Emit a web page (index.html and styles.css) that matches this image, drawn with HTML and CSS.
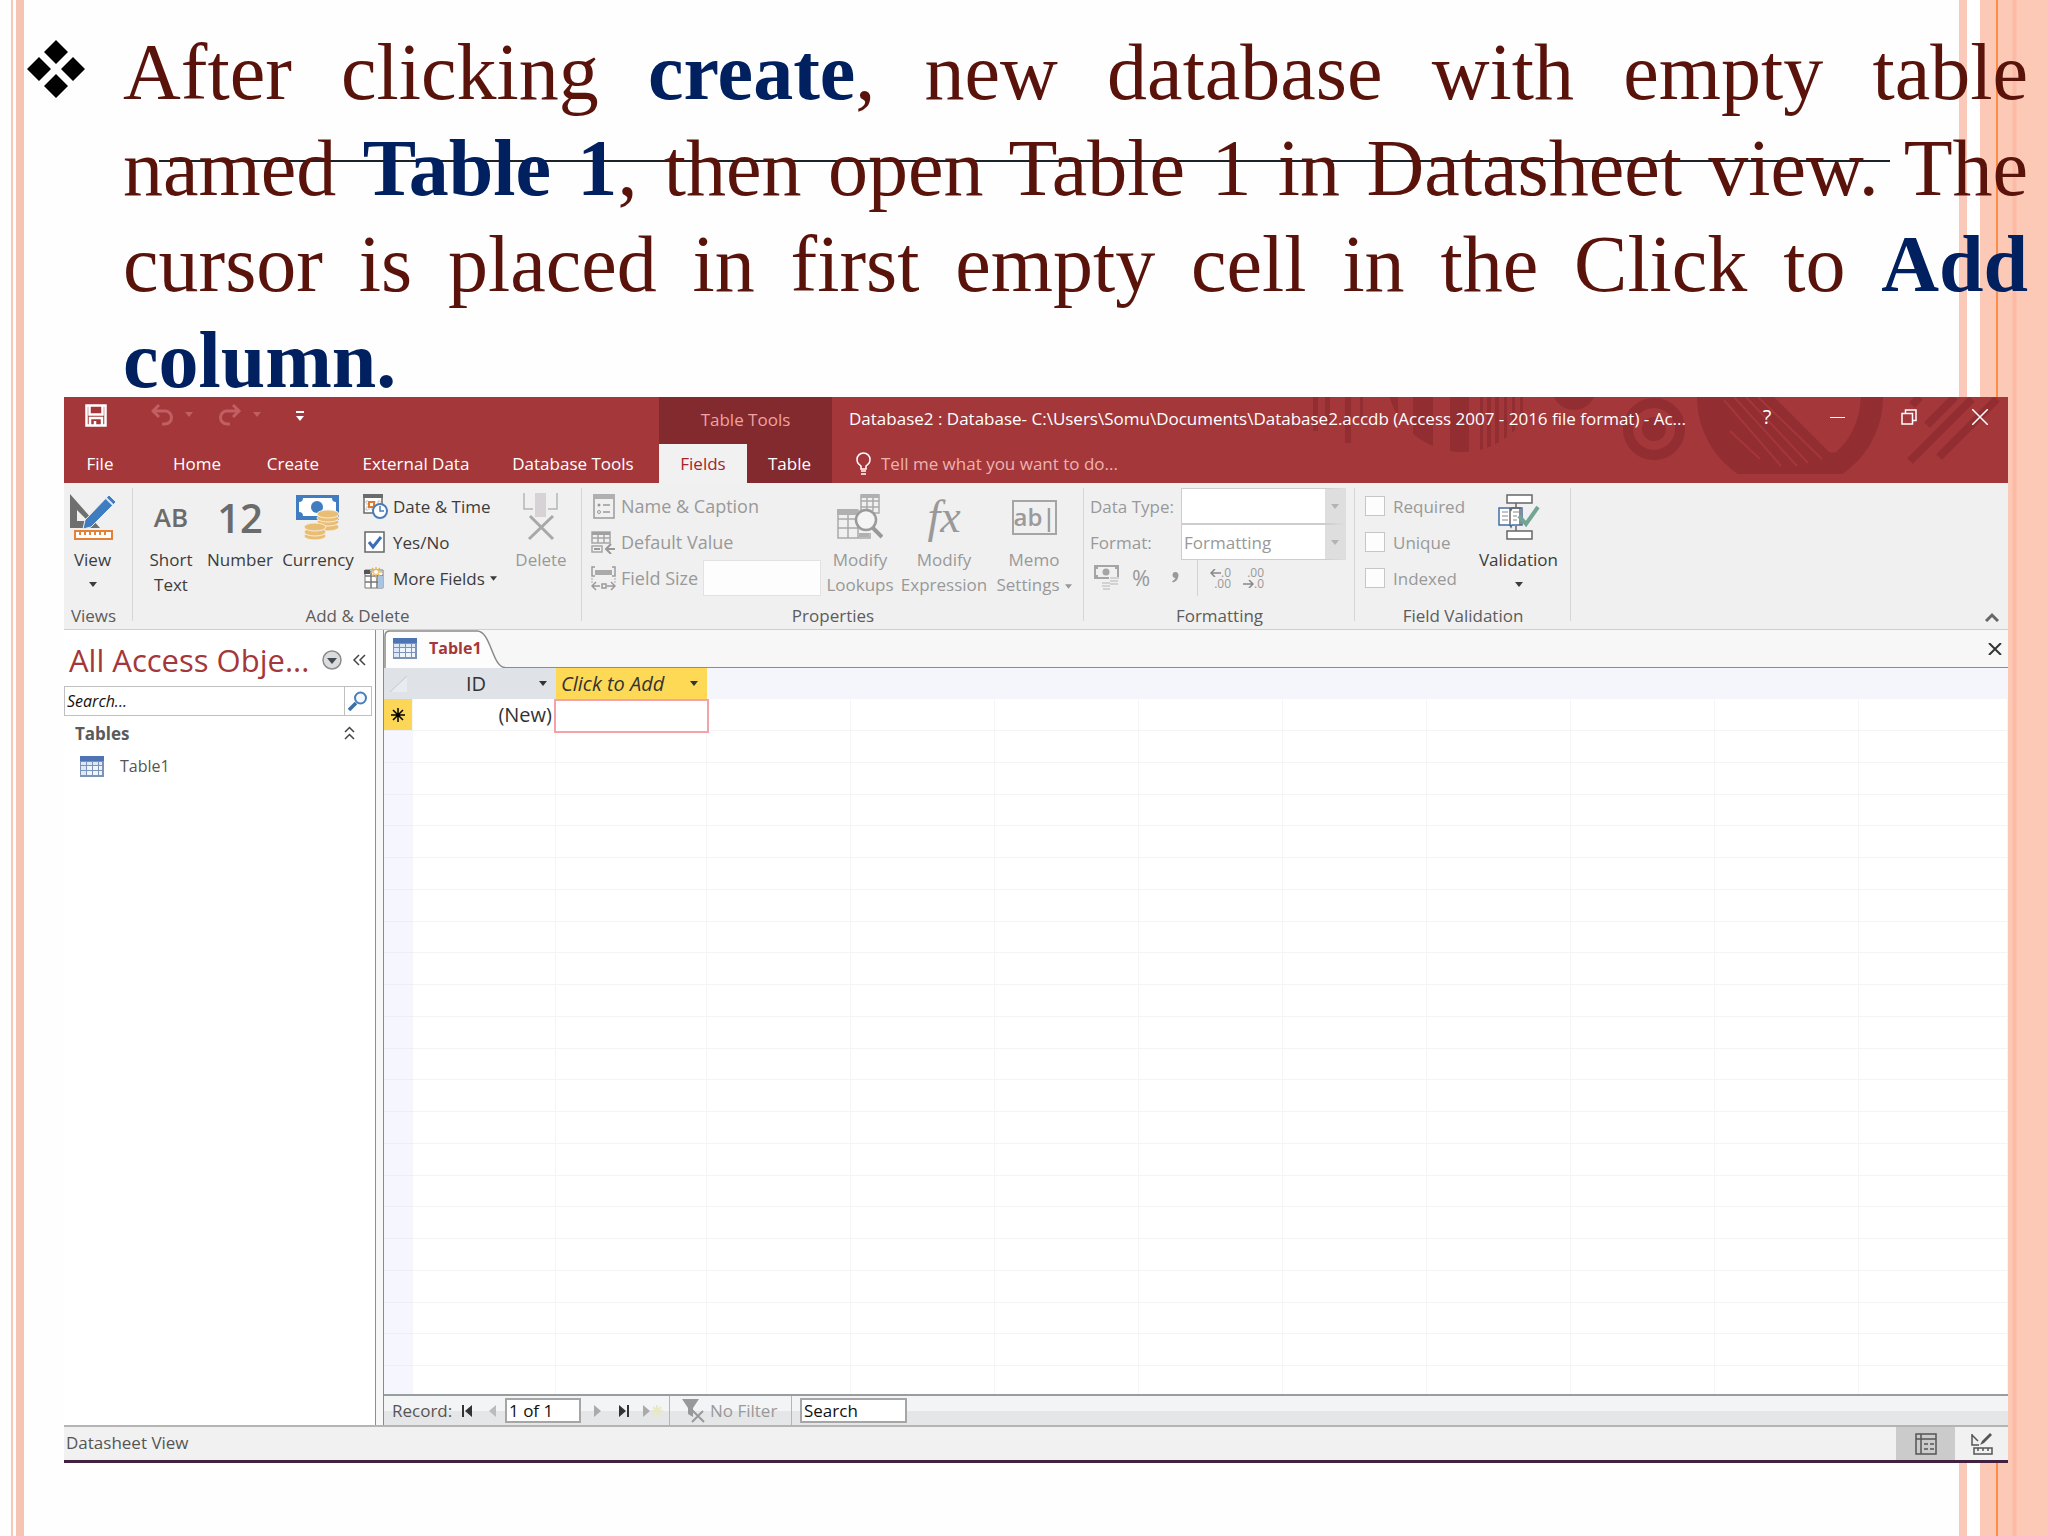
FILE: index.html
```html
<!DOCTYPE html>
<html lang="en">
<head>
<meta charset="utf-8">
<title>Access 2016 - Datasheet view</title>
<link rel="stylesheet" href="styles.css">
</head>
<body>
<svg class="sprite" width="0" height="0" aria-hidden="true">
  <symbol id="datasheet" viewBox="0 0 24 21">
    <rect width="24" height="21" fill="#7d93b5"/><rect width="24" height="5" fill="#4f74b3"/>
    <path d="M1 6h5v3H1zM7 6h5v3H7zM13 6h5v3h-5zM19 6h3v3h-3zM1 10h5v4H1zM1 15h5v4H1z" fill="#dce8f8"/>
    <path d="M7 10h5v4H7zM13 10h5v4h-5zM19 10h3v4h-3zM7 15h5v4H7zM13 15h5v4h-5zM19 15h3v4h-3z" fill="#eef4fc"/>
  </symbol>
  <symbol id="caret" viewBox="0 0 8 5"><path d="M0 0h8L4 5z" fill="currentColor"/></symbol>
</svg>
<main class="slide">
  <div class="rule"></div>
  <section class="bullet">
    <svg class="bullet-mark" width="58" height="58" viewBox="0 0 58 58" aria-hidden="true"><path d="M29 0l12 12-12 12-12-12zM29 34l12 12-12 12-12-12zM12 17l12 12-12 12L0 29zM46 17l12 12-12 12-12-12z"/></svg>
    <p>After clicking <b>create</b>, new database with empty table named <b>Table 1</b>, then open Table 1 in Datasheet view. The cursor is placed in first empty cell in the Click to <b>Add column.</b></p>
  </section>

  <section class="window">
    <header class="titlebar">
      <svg class="title-art" width="708" height="86" viewBox="0 0 708 86" aria-hidden="true">
        <defs>
          <clipPath id="disc"><circle cx="162" cy="-20" r="75"/></clipPath>
          <clipPath id="flat"><path d="M380 0h220v77H380z"/></clipPath>
        </defs>
        <g fill="#922d31">
          <path d="M13 0h5v34h-5zM25 0h5v28h-5zM45 0h6v46h-6zM60 0h3v26h-3z"/>
          <path clip-path="url(#disc)" d="M88 0h10v60H88zM113 0h20v60h-20zM150 0h19v60h-19zM180 0h3v60h-3zM187 0h4v60h-4zM195 0h4v60h-4zM204 0h3v60h-3zM212 0h3v60h-3zM220 0h3v60h-3z"/>
          <circle cx="274" cy="-9" r="22"/>
          <circle cx="354" cy="32" r="12"/>
          <circle cx="490" cy="0" r="93" clip-path="url(#flat)"/>
        </g>
        <circle cx="354" cy="32" r="26" fill="none" stroke="#922d31" stroke-width="10"/>
        <path d="M474 0l54 54q3 3 8 1 23-20 25-55z" fill="#a4373a"/>
        <path d="M424 3l57 66M434 0l63 69M446 0l62 66M458 0l64 62M430 34l30 28" stroke="#a4373a" stroke-width="2" fill="none"/>
        <path d="M655 0l-28 28M620 0l-8 8M697 2l-58 58M672 2l-62 62" stroke="#922d31" stroke-width="8" fill="none"/>
      </svg>
      <div class="quick">
        <button class="bare save" aria-label="Save"><svg width="22" height="23" viewBox="0 0 22 23"><path d="M1.500 1.500h19v20h-19zM4.500 2v8.500h13V2M5 21v-7h12v7M10 21v-4" fill="none" stroke="#fff" stroke-width="2.500"/></svg></button>
        <button class="bare" aria-label="Undo"><svg width="42" height="22" viewBox="0 0 42 22"><path d="M8 1L2 7l6 6M2 7h12a6 6 0 0 1 0 13h-3" fill="none" stroke="#c15f62" stroke-width="3"/><path d="M34 8h8l-4 5z" fill="#c15f62"/></svg></button>
        <button class="bare" aria-label="Redo"><svg width="42" height="22" viewBox="0 0 42 22"><path d="M14 1l6 6-6 6M20 7H8a6 6 0 0 0 0 13h3" fill="none" stroke="#c15f62" stroke-width="3"/><path d="M34 8h8l-4 5z" fill="#c15f62"/></svg></button>
        <button class="bare" aria-label="Customize toolbar"><svg width="8" height="11" viewBox="0 0 8 11"><path d="M0 0h8v2H0zM0 5h8l-4 5z" fill="#fff"/></svg></button>
      </div>
      <nav class="tabs main-tabs">
        <button class="bare">File</button><button class="bare">Home</button><button class="bare">Create</button><button class="bare">External Data</button><button class="bare">Database Tools</button>
      </nav>
      <div class="context-title">Table Tools</div>
      <nav class="tabs context-tabs"><button class="bare active">Fields</button><button class="bare">Table</button></nav>
      <div class="caption">
        <span class="caption-text">Database2 : Database- C:\Users\Somu\Documents\Database2.accdb (Access 2007 - 2016 file format) - Ac...</span>
        <span class="window-buttons">
          <button class="bare help" aria-label="Help">?</button>
          <button class="bare" aria-label="Minimize"><svg width="16" height="16" viewBox="0 0 16 16"><path d="M0 8.500h15" stroke="#fff" stroke-width="1"/></svg></button>
          <button class="bare" aria-label="Restore"><svg width="16" height="16" viewBox="0 0 16 16"><path d="M1 4.500h10.500V15H1zM4.500 4V1H15v10.500h-3" fill="none" stroke="#fff" stroke-width="1.500"/></svg></button>
          <button class="bare" aria-label="Close"><svg width="16" height="16" viewBox="0 0 16 16"><path d="M0 0l16 16M16 0L0 16" stroke="#fff" stroke-width="1.500"/></svg></button>
        </span>
      </div>
      <label class="tell">
        <svg width="15" height="23" viewBox="0 0 15 23" aria-hidden="true"><path d="M5 17v-3C2 12 1 10 1 7.500a6.500 6.500 0 0 1 13 0C14 10 13 12 10 14v3zM5 19h5M5 22h5" fill="none" stroke="#fff" stroke-width="1.500"/></svg>
        <input type="text" aria-label="Tell me" placeholder="Tell me what you want to do...">
      </label>
    </header>

    <div class="ribbon">
      <section class="group views">
        <div class="tools">
          <button class="bare large"><span class="icon"><svg width="48" height="48" viewBox="0 0 48 48">
            <path d="M1 1l30 34H1zM8 17v11h11z" fill="#6f6f6f" fill-rule="evenodd"/>
            <path d="M14 36l2-9L40 2l7 7-25 25z" fill="#3f7dc0" stroke="#f0f0f0" stroke-width="1"/><path d="M37 5l7 7" stroke="#dbe8f5" stroke-width="2"/>
            <path d="M6 38h37v8H6z" fill="#fff" stroke="#e58137" stroke-width="2"/><path d="M11 38v4M16 38v4M21 38v4M26 38v4M31 38v4M36 38v4" stroke="#e58137" stroke-width="2"/></svg></span>
            <span>View</span><span class="drop"><svg width="8" height="5"><use href="#caret"/></svg></span></button>
        </div>
        <h2>Views</h2>
      </section>

      <section class="group add">
        <div class="tools">
          <button class="bare large"><span class="icon glyph-ab">AB</span><span>Short<br>Text</span></button>
          <button class="bare large"><span class="icon glyph-12">12</span><span>Number</span></button>
          <button class="bare large"><span class="icon"><svg width="44" height="46" viewBox="0 0 44 46">
            <path d="M0 1h43v25H0z" fill="#3f7dc0"/><path d="M7 4h29q0 4 4 4v10q-4 0-4 4H7q0-4-4-4V8q4 0 4-4z" fill="#fff"/><circle cx="21" cy="13" r="6" fill="#3f7dc0"/>
            <g fill="#e9bd73" stroke="#f6efe2" stroke-width="1"><ellipse cx="32" cy="33" rx="11" ry="4"/><ellipse cx="32" cy="28" rx="11" ry="4"/><ellipse cx="32" cy="24" rx="11" ry="4"/><ellipse cx="32" cy="20" rx="11" ry="4"/><ellipse cx="19" cy="42" rx="11" ry="4"/><ellipse cx="19" cy="38" rx="11" ry="4"/><ellipse cx="19" cy="33" rx="11" ry="4"/></g></svg></span><span>Currency</span></button>
          <div class="stack">
            <button class="bare small"><svg width="25" height="25" viewBox="0 0 25 25"><path d="M1 1h18v18H1z" fill="#fff" stroke="#6b6b6b" stroke-width="1.500"/><path d="M0 0h20v4H0z" fill="#6b6b6b"/><path d="M4 6v12M16 6v12M2 8h16M2 15h16" stroke="#bbb" stroke-dasharray="2 1"/><path d="M6 8h5v5H6z" fill="#fff" stroke="#e07a2e" stroke-width="2"/><circle cx="17" cy="17" r="7" fill="#fff" stroke="#4a7db8" stroke-width="2"/><path d="M17 12v5h4" fill="none" stroke="#4a7db8" stroke-width="1.500"/></svg>Date &amp; Time</button>
            <button class="bare small"><svg width="25" height="22" viewBox="0 0 25 22"><path d="M2 1h19v20H2z" fill="#fff" stroke="#666" stroke-width="1.500"/><path d="M6 11l4 5 8-10" fill="none" stroke="#3a70b5" stroke-width="3"/></svg>Yes/No</button>
            <button class="bare small"><svg width="25" height="22" viewBox="0 0 25 22"><path d="M2 3h18v18H2z" fill="#fff" stroke="#777"/><path d="M1 3h6v4H1z" fill="#555"/><path d="M2 9h18M2 15h18M8 4v17M14 8v13" stroke="#777" stroke-width="1.500"/><path d="M15 9h5v12h-5z" fill="#a9c4e0"/><path d="M13 0v11M8 5h11M9 1l8 8M17 1L9 9" stroke="#e9b557" stroke-width="1.500"/><circle cx="13" cy="5" r="2" fill="#fff"/></svg>More Fields<svg class="after" width="7" height="5"><use href="#caret"/></svg></button>
          </div>
          <button class="bare large" disabled><span class="icon"><svg width="36" height="48" viewBox="0 0 36 48"><path d="M1 0v16h9M34 0v16h-9" fill="none" stroke="#b5b5b5" stroke-width="1.500"/><path d="M12 0h11v24H12z" fill="#d6d2d6"/><path d="M7 23l23 23M30 23L6 46" stroke="#a8a8a8" stroke-width="3"/></svg></span><span>Delete</span></button>
        </div>
        <h2>Add &amp; Delete</h2>
      </section>

      <section class="group props">
        <div class="tools">
          <div class="stack">
            <button class="bare small" disabled><svg width="25" height="25" viewBox="0 0 25 25"><path d="M3 1h20v23H3z" fill="none" stroke="#9a9a9a" stroke-width="1.500"/><path d="M2 0h22v5H2z" fill="#b0b0b0"/><circle cx="8" cy="11" r="1.500" fill="#999"/><circle cx="8" cy="18" r="1.500" fill="none" stroke="#999"/><path d="M12 11h7M12 18h7" stroke="#999" stroke-width="1.500"/></svg>Name &amp; Caption</button>
            <button class="bare small" disabled><svg width="25" height="23" viewBox="0 0 25 23"><path d="M1 1h18v11H1zM1 7h18M7 3v9M13 3v9M1 15h10v6H1z" fill="none" stroke="#a5a5a5" stroke-width="1.500"/><path d="M1 1h18v3H1z" fill="#a0a0a0"/><path d="M24 18h-8M20 13l-5 5 5 5M3 18h6" fill="none" stroke="#999" stroke-width="2"/></svg>Default Value</button>
            <div class="field-row"><label class="small" for="size"><svg width="25" height="25" viewBox="0 0 25 25"><path d="M4 1H1v9h3M21 1h3v9h-3" fill="none" stroke="#999" stroke-width="1.500"/><path d="M4 4h17v5H4z" fill="#aaa"/><path d="M1 12v5M24 12v5" stroke="#aaa" stroke-dasharray="2 1"/><path d="M5 16l-4 4 4 4M1 20h8M20 16l4 4-4 4M24 20h-8M11 18h4v4h-4z" fill="none" stroke="#999" stroke-width="1.500"/></svg>Field Size</label><input id="size" type="text" disabled></div>
          </div>
          <button class="bare large" disabled><span class="icon"><svg width="46" height="46" viewBox="0 0 46 46"><g fill="none" stroke="#a9a9a9" stroke-width="1.500"><path d="M24 1h18v18H24zM24 7h18M24 13h18M30 3v14M36 3v14M1 16h20v28H1zM1 25h20M1 34h20M11 20v24M21 44h12v-5"/></g><path d="M24 0h18v4H24zM0 15h20v6H0zM22 39h10v4H22z" fill="#b0b0b0"/><path d="M36 34l9 9" stroke="#999" stroke-width="4"/><circle cx="29" cy="26" r="10" fill="#f4f4f4" stroke="#9a9a9a" stroke-width="2.500"/></svg></span><span>Modify<br>Lookups</span></button>
          <button class="bare large" disabled><span class="icon glyph-fx">fx</span><span>Modify<br>Expression</span></button>
          <button class="bare large" disabled><span class="icon"><span class="glyph-memo">ab|</span></span><span>Memo<br>Settings<svg class="after" width="7" height="5"><use href="#caret"/></svg></span></button>
        </div>
        <h2>Properties</h2>
      </section>

      <section class="group format">
        <div class="tools">
          <div class="stack">
            <div class="field-row"><label for="dtype">Data Type:</label><span class="combo"><select id="dtype" disabled><option></option></select><svg width="8" height="5" aria-hidden="true"><use href="#caret"/></svg></span></div>
            <div class="field-row"><label for="fmt">Format:</label><span class="combo"><select id="fmt" disabled><option>Formatting</option></select><svg width="8" height="5" aria-hidden="true"><use href="#caret"/></svg></span></div>
            <div class="number-formats">
              <button class="bare" disabled aria-label="Currency"><svg width="26" height="26" viewBox="0 0 26 26"><path d="M1 1h23v12H1z" fill="none" stroke="#a5a5a5" stroke-width="2"/><circle cx="12" cy="7" r="3.500" fill="#a5a5a5"/><path d="M0 0h4v4H0zM21 0h4v4h-4zM0 10h4v4H0z" fill="#a5a5a5"/><path d="M15 12h10v9H15zM8 17h10v8H8z" fill="#f0f0f0"/><path d="M16 13h9M16 16h8M16 19h8M8 18h8M8 21h8M9 24h7" stroke="#c8c8c8" stroke-width="1.500"/></svg></button>
              <button class="bare pct" disabled>%</button>
              <button class="bare comma" disabled aria-label="Comma style"><svg width="7" height="11" viewBox="0 0 8 13"><path d="M4 0a3.500 3.500 0 0 1 3.500 4C7.500 8 5 11 1 12.500L0 11q3-2 4-4A3.500 3.500 0 0 1 4 0z" fill="#999"/></svg></button>
              <button class="bare decimals" disabled><svg width="11" height="8" viewBox="0 0 11 8"><path d="M5 0L1 4l4 4M1 4h10" fill="none" stroke="#888" stroke-width="1.500"/></svg>.0<br>.00</button>
              <button class="bare decimals" disabled>.00<br><svg width="11" height="8" viewBox="0 0 11 8"><path d="M6 0l4 4-4 4M10 4H0" fill="none" stroke="#888" stroke-width="1.500"/></svg>.0</button>
            </div>
          </div>
        </div>
        <h2>Formatting</h2>
      </section>

      <section class="group valid">
        <div class="tools">
          <div class="stack">
            <label class="check"><input type="checkbox" disabled>Required</label>
            <label class="check"><input type="checkbox" disabled>Unique</label>
            <label class="check"><input type="checkbox" disabled>Indexed</label>
          </div>
          <button class="bare large"><span class="icon"><svg width="42" height="46" viewBox="0 0 42 46"><path d="M9 1h25v8H9zM9 37h25v8H9zM18 9v4M18 32v5" fill="#fff" stroke="#666" stroke-width="1.500"/><path d="M1 14h11l1 2 1-2h10v17H14l-1 2-1-2H1z" fill="#fff" stroke="#3f6fa8" stroke-width="1.500"/><path d="M12 14h10v17M12 14v18" fill="none" stroke="#666" stroke-width="1.500"/><path d="M4 18h6M4 22h6M4 26h6M15 18h6M15 22h4M15 26h4" stroke="#888"/><path d="M21 22l7 8 12-17" fill="none" stroke="#72a594" stroke-width="4"/></svg></span><span>Validation</span><span class="drop"><svg width="8" height="5"><use href="#caret"/></svg></span></button>
        </div>
        <h2>Field Validation</h2>
      </section>
      <button class="bare collapse" aria-label="Collapse the ribbon"><svg width="14" height="10" viewBox="0 0 14 10"><path d="M1 9l6-6 6 6" fill="none" stroke="#666" stroke-width="3"/></svg></button>
    </div>

    <div class="workspace">
      <aside class="objects">
        <div class="objects-head"><h1>All Access Obje...</h1>
          <button class="bare" aria-label="Choose category"><svg width="20" height="20" viewBox="0 0 20 20"><circle cx="10" cy="10" r="9" fill="#dcdcde" stroke="#8c8c8c" stroke-width="1.500"/><path d="M5 8h10l-5 6z" fill="#444b55"/></svg></button>
          <button class="bare" aria-label="Close pane"><svg width="14" height="12" viewBox="0 0 14 12"><path d="M6 1L1 6l5 5M12 1L7 6l5 5" fill="none" stroke="#444" stroke-width="1.500"/></svg></button></div>
        <div class="search"><input type="text" aria-label="Search objects" placeholder="Search..."><button class="bare" aria-label="Search"><svg width="20" height="20" viewBox="0 0 20 20"><path d="M1 19l7-7" stroke="#3d6ea8" stroke-width="3.500"/><circle cx="12.500" cy="7" r="5.500" fill="#f4f9ff" stroke="#4a7fb5" stroke-width="2"/></svg></button></div>
        <div class="section-head"><span>Tables</span><svg width="11" height="14" viewBox="0 0 11 14" aria-hidden="true"><path d="M1 6l4.500-4.500L10 6M1 13l4.500-4.500L10 13" fill="none" stroke="#444" stroke-width="1.500"/></svg></div>
        <a class="object" href="#"><svg width="24" height="21"><use href="#datasheet"/></svg>Table1</a>
      </aside>

      <section class="document">
        <div class="doc-tabs">
          <button class="bare doc-tab"><svg class="tab-shape" width="122" height="38" viewBox="0 0 122 38" aria-hidden="true"><path d="M0 38V6q0-5 5-5h88c14 0 15 36 28 37z" fill="#fdfdfd"/><path d="M1 38V6q0-5 5-5h87c14 0 15 36 28 36.500" fill="none" stroke="#8d8a86" stroke-width="1.500"/></svg><svg class="tab-icon" width="24" height="21"><use href="#datasheet"/></svg><span>Table1</span></button>
          <button class="bare" aria-label="Close table"><svg width="14" height="12" viewBox="0 0 14 12"><path d="M1 0l12 12M13 0L1 12" stroke="#333" stroke-width="2"/></svg></button>
        </div>
        <table class="sheet">
          <colgroup><col class="c-mark"><col class="c-id"><col class="c-add"><col class="c"><col class="c"><col class="c"><col class="c"><col class="c"><col class="c"><col class="c"><col class="c"><col></colgroup>
          <thead><tr><th class="corner"><svg width="17" height="16" viewBox="0 0 17 16" aria-hidden="true"><path d="M17 0v16H0z" fill="#e8ebef"/><path d="M0 16L17 0" stroke="#c3c8d0"/></svg></th>
          <th class="id"><div><span>ID</span><svg width="8" height="5"><use href="#caret"/></svg></div></th>
          <th class="add-col"><div><span>Click to Add</span><svg width="8" height="5"><use href="#caret"/></svg></div></th>
          <th></th><th></th><th></th><th></th><th></th><th></th><th></th><th></th><th></th></tr></thead>
          <tbody>
            <tr><th class="new"><svg width="14" height="14" viewBox="0 0 14 14" aria-label="New record"><path d="M7 0v14M0 7h14M2 2l10 10M12 2L2 12" stroke="#000" stroke-width="1.500"/></svg></th><td class="value">(New)</td><td class="entry"><input type="text" aria-label="Click to Add"></td><td></td><td></td><td></td><td></td><td></td><td></td><td></td><td></td><td></td></tr>
            <tr><th></th><td></td><td></td><td></td><td></td><td></td><td></td><td></td><td></td><td></td><td></td><td></td></tr>
            <tr><th></th><td></td><td></td><td></td><td></td><td></td><td></td><td></td><td></td><td></td><td></td><td></td></tr>
            <tr><th></th><td></td><td></td><td></td><td></td><td></td><td></td><td></td><td></td><td></td><td></td><td></td></tr>
            <tr><th></th><td></td><td></td><td></td><td></td><td></td><td></td><td></td><td></td><td></td><td></td><td></td></tr>
            <tr><th></th><td></td><td></td><td></td><td></td><td></td><td></td><td></td><td></td><td></td><td></td><td></td></tr>
            <tr><th></th><td></td><td></td><td></td><td></td><td></td><td></td><td></td><td></td><td></td><td></td><td></td></tr>
            <tr><th></th><td></td><td></td><td></td><td></td><td></td><td></td><td></td><td></td><td></td><td></td><td></td></tr>
            <tr><th></th><td></td><td></td><td></td><td></td><td></td><td></td><td></td><td></td><td></td><td></td><td></td></tr>
            <tr><th></th><td></td><td></td><td></td><td></td><td></td><td></td><td></td><td></td><td></td><td></td><td></td></tr>
            <tr><th></th><td></td><td></td><td></td><td></td><td></td><td></td><td></td><td></td><td></td><td></td><td></td></tr>
            <tr><th></th><td></td><td></td><td></td><td></td><td></td><td></td><td></td><td></td><td></td><td></td><td></td></tr>
            <tr><th></th><td></td><td></td><td></td><td></td><td></td><td></td><td></td><td></td><td></td><td></td><td></td></tr>
            <tr><th></th><td></td><td></td><td></td><td></td><td></td><td></td><td></td><td></td><td></td><td></td><td></td></tr>
            <tr><th></th><td></td><td></td><td></td><td></td><td></td><td></td><td></td><td></td><td></td><td></td><td></td></tr>
            <tr><th></th><td></td><td></td><td></td><td></td><td></td><td></td><td></td><td></td><td></td><td></td><td></td></tr>
            <tr><th></th><td></td><td></td><td></td><td></td><td></td><td></td><td></td><td></td><td></td><td></td><td></td></tr>
            <tr><th></th><td></td><td></td><td></td><td></td><td></td><td></td><td></td><td></td><td></td><td></td><td></td></tr>
            <tr><th></th><td></td><td></td><td></td><td></td><td></td><td></td><td></td><td></td><td></td><td></td><td></td></tr>
            <tr><th></th><td></td><td></td><td></td><td></td><td></td><td></td><td></td><td></td><td></td><td></td><td></td></tr>
            <tr><th></th><td></td><td></td><td></td><td></td><td></td><td></td><td></td><td></td><td></td><td></td><td></td></tr>
            <tr class="last"><th></th><td></td><td></td><td></td><td></td><td></td><td></td><td></td><td></td><td></td><td></td><td></td></tr>
          </tbody>
        </table>
        <div class="records">
          <label for="rec">Record:</label>
          <span class="step"><button class="bare" aria-label="First record"><svg width="10" height="12" viewBox="0 0 10 12"><path d="M0 0h2v12H0zM10 0v12L3 6z" fill="#333"/></svg></button>
          <button class="bare" disabled aria-label="Previous record"><svg width="7" height="12" viewBox="0 0 7 12"><path d="M7 0v12L0 6z" fill="#bbb"/></svg></button></span>
          <input id="rec" type="text" value="1 of 1">
          <span class="step next"><button class="bare" disabled aria-label="Next record"><svg width="7" height="12" viewBox="0 0 7 12"><path d="M0 0v12l7-6z" fill="#aaa"/></svg></button>
          <button class="bare" aria-label="Last record"><svg width="10" height="12" viewBox="0 0 10 12"><path d="M8 0h2v12H8zM0 0v12l7-6z" fill="#333"/></svg></button>
          <button class="bare" disabled aria-label="New record"><svg width="21" height="14" viewBox="0 0 21 14"><path d="M0 1v12l7-6z" fill="#aaa"/><path d="M14 1v12M8 7h12M10 3l8 8M18 3l-8 8" stroke="#e9e8c6" stroke-width="2"/></svg></button></span>
          <button class="bare filter" disabled><svg width="23" height="24" viewBox="0 0 23 24"><path d="M0 0h17l-6 9v9L6 15V9z" fill="#999"/><path d="M10 11l12 12M21 12L10 23" stroke="#999" stroke-width="2"/></svg>No Filter</button>
          <input class="find" type="text" aria-label="Search records" value="Search">
        </div>
      </section>
    </div>

    <footer class="status"><span>Datasheet View</span>
      <span class="modes">
        <button class="bare on" aria-label="Datasheet view"><svg width="22" height="22" viewBox="0 0 22 22"><path d="M1 1h20v20H1zM1 6h20M6 1v20" fill="none" stroke="#555" stroke-width="1.500"/><path d="M9 11h4M15 11h4M9 16h4M15 16h4" stroke="#555" stroke-width="1.500"/></svg></button>
        <button class="bare" aria-label="Design view"><svg width="22" height="22" viewBox="0 0 22 22"><path d="M1 1v11h7M1 2l6 6M3 15h18v6H3zM7 15v3M12 15v3M17 15v3" fill="none" stroke="#555" stroke-width="1.500"/><path d="M9 12l2-4 8-8 2 2-8 8z" fill="#555"/></svg></button>
      </span>
    </footer>
  </section>
</main>
</body>
</html>
```
FILE: styles.css
```css
* { box-sizing: border-box; }
body {
  margin: 0;
  min-height: 100vh;
  font: 17px/25px "Open Sans", "Noto Sans", sans-serif;
  color: #3c3c3c;
  background:
    linear-gradient(90deg, transparent 11px, #f7c6b5 11px 13px, transparent 13px 16px, #f6c4b3 16px 24px, transparent 24px),
    linear-gradient(270deg, #fdc9b7 31px, #fdbba5 32px 35px, #fdc9b7 36px 50px, #ff8b45 50px 52px, #fdc9b7 52px 68px, #fff 68px 81px, #fac9ba 81px 89px, #fefefe 89px);
}
h1, h2, p { margin: 0; font-weight: 400; }
input, select, button { font: inherit; color: inherit; }
.bare { border: 0; padding: 0; background: none; }
.bare svg { display: block; }
.sprite { position: absolute; }
.slide { position: relative; padding: 24px 0 74px; }

.rule { position: absolute; left: 159px; right: 158px; top: 160px; height: 2px; background: #1c2226; }
.bullet { position: relative; display: flex; gap: 38px; padding: 0 20px 0 27px; }
.bullet-mark { flex: none; margin-top: 16px; }
.bullet p { flex: 1; text-align: justify; font: 80px/96px "Liberation Serif", serif; color: #5a130b; }
.bullet b { color: #002060; }

.window { position: relative; margin: -11px 40px 0 64px; background: #fff; border-bottom: 3px solid #41213f; }

.titlebar { position: relative; display: grid; grid-template: 47px 39px / 595px 173px 1fr; grid-auto-flow: column; background: #a4373a; color: #fff; overflow: hidden; }
.titlebar > :not(.title-art) { position: relative; }
.title-art { position: absolute; right: 0; top: 0; }
.quick { display: flex; align-items: flex-start; gap: 26px; padding: 7px 0 0 21px; }
.quick .save { margin-right: 18px; }
.quick button:last-child { padding: 7px 0 0 9px; }
.tabs { display: grid; }
.main-tabs { grid-template-columns: 72px 122px 70px 176px 138px; }
.main-tabs .bare { white-space: nowrap; }
.context-title { background: #822a2d; color: #f0a2a2; text-align: center; line-height: 46px; }
.context-tabs { grid-template-columns: 88px 85px; background: #822a2d; }
.active { background: #f1f1f1; color: #a4262c; }
.caption { display: flex; justify-content: space-between; padding: 0 13px 0 17px; align-items: flex-start; }
.caption-text { line-height: 44px; white-space: nowrap; overflow: hidden; }
.window-buttons { display: flex; gap: 41px; padding-top: 12px; }
.window-buttons button { width: 30px; display: grid; place-items: center; height: 16px; }
.window-buttons .help { font-size: 20px; line-height: 16px; height: 14px; }
.tell { display: flex; align-items: center; gap: 10px; padding-left: 24px; }
.tell input { border: 0; background: none; width: 320px; padding: 0; }
.tell input::placeholder { color: #eeb3b1; opacity: 1; }

.ribbon { display: flex; height: 147px; background: #f0f0f0; border-bottom: 1px solid #cfcfcf; }
.group { position: relative; display: flex; flex-direction: column; justify-content: space-between; }
.group::after { content: ""; position: absolute; right: 0; top: 5px; bottom: 8px; width: 1px; background: #d6d6d6; }
.group h2 { font-size: 17px; text-align: center; color: #5c5c5c; line-height: 26px; }
.tools { display: flex; align-items: flex-start; }
.large { display: flex; flex-direction: column; align-items: center; padding-top: 8px; line-height: 25px; white-space: nowrap; }
.icon { display: flex; height: 52px; align-items: center; justify-content: center; margin-bottom: 4px; }
.drop { height: 25px; display: grid; place-items: center; }
.after { display: inline-block !important; margin-left: 5px; vertical-align: middle; }
button:disabled, .props label, .format label, .check { color: #999; }
.stack { padding-top: 5px; }
.small { display: flex; align-items: center; gap: 5px; height: 36px; white-space: nowrap; }
.small .after { margin-left: 0; }
.field-row { display: flex; align-items: center; height: 36px; }
.views { width: 69px; padding-right: 10px; }
.views .large { width: 57px; }
.add { width: 449px; }
.add .tools { padding-left: 8px; }
.add .large { width: 78px; }
.add .large:first-child, .add .large:last-child { width: 60px; }
.add .stack { width: 154px; padding-left: 6px; }
.props { width: 502px; }
.props .tools { padding-left: 9px; }
.props .stack { width: 233px; }
.props .small { font-size: 18px; }
.props .field-row { justify-content: space-between; }
.props .field-row input { width: 118px; height: 36px; margin-right: 3px; border: 1px solid #e2e2e2; background: #fdfdfd; }
.props .large { width: 72px; }
.props .large:nth-child(3) { width: 96px; }
.props .large:nth-child(4) { width: 84px; }
.format { width: 271px; }
.format .stack { width: 262px; padding-left: 6px; }
.format .field-row { justify-content: space-between; }
.combo { position: relative; width: 165px; height: 36px; }
.combo select { width: 100%; height: 100%; appearance: none; border: 1px solid #cdcdcd; border-right: 21px solid #dedede; background: #fff; padding: 0 2px; border-radius: 0; color: #999; opacity: 1; }
.combo svg { position: absolute; right: 7px; top: 16px; color: #b3b3b3; }
.number-formats { display: flex; height: 35px; align-items: center; padding-left: 4px; }
.pct { width: 42px; font-size: 22px; }
.comma { width: 36px; height: 37px; padding-left: 10px; border-right: 1px solid #d3d3d3; }
.number-formats .decimals { width: 33px; font-size: 12px; line-height: 11px; text-align: right; white-space: nowrap; }
.decimals svg { display: inline-block; }
.valid { width: 216px; }
.valid .stack { width: 122px; padding-left: 10px; }
.check { display: flex; align-items: center; gap: 8px; height: 36px; }
.check input { appearance: none; margin: 0; width: 20px; height: 20px; border: 1px solid #c6c6c6; background: #fdfdfd; }
.valid .large { width: 83px; }
.collapse { margin: auto 9px 7px auto; }
.glyph-ab { font-size: 26px; font-weight: 600; color: #6b6b6b; }
.glyph-12 { font-size: 40px; font-weight: 600; color: #6b6b6b; }
.glyph-fx { font: italic 46px/46px "Liberation Serif", serif; color: #999; }
.glyph-memo { width: 45px; height: 35px; border: 2px solid #a5a5a5; font-size: 24px; line-height: 29px; font-weight: 600; color: #9a9a9a; }

.workspace { display: flex; background: #f7f7f7; }
.objects { width: 312px; background: #fff; border-right: 1px solid #8f8f8f; }
.objects-head { display: flex; align-items: center; height: 56px; padding: 3px 8px 0 5px; gap: 11px; }
.objects-head h1 { flex: 1; font-size: 31px; line-height: 40px; color: #a4373a; white-space: nowrap; }
.search { display: grid; grid-template-columns: 1fr 26px; height: 30px; margin-right: 3px; border: 1px solid #c0c0c0; }
.search input { border: 0; border-right: 1px solid #c0c0c0; padding: 0 2px; min-width: 0; font-style: italic; font-size: 16px; }
.search input::placeholder { color: #111; opacity: 1; }
.search button { display: grid; place-items: center; }
.section-head { display: flex; justify-content: space-between; align-items: center; height: 34px; padding: 0 20px 0 11px; font-weight: 700; color: #5a5a5a; }
.object { display: flex; align-items: center; gap: 16px; height: 33px; padding-left: 16px; font-size: 16px; color: #555; text-decoration: none; }

.document { flex: 1; min-width: 0; margin-left: 7px; border-left: 1px solid #8a8a8a; }
.doc-tabs { display: flex; justify-content: space-between; align-items: center; height: 38px; padding-right: 6px; border-bottom: 1px solid #8a8d90; }
.doc-tab { position: relative; display: flex; align-items: center; gap: 12px; width: 122px; height: 38px; padding-left: 9px; color: #a4373a; font-size: 16px; font-weight: 700; }
.doc-tab .tab-shape { position: absolute; left: 0; top: 0; }
.doc-tab span, .doc-tab .tab-icon { position: relative; }
.sheet { width: 100%; table-layout: fixed; border-collapse: separate; border-spacing: 0; background: #fff; color: #333; font-size: 20px; }
.sheet th, .sheet td { padding: 0; height: 32px; border-right: 1px solid #f5f5f7; border-bottom: 1px solid #f4f4f6; font-weight: 400; }
.sheet tbody tr:nth-child(4n) > * { height: 31px; }
.sheet tbody th { background: #f6f7fe; border-bottom-color: #eceef8; }
.sheet thead th { height: 31px; background: #f4f6fc; border: 0; }
.sheet tbody .last > * { height: 28px; border-bottom: 0; }
.c-mark { width: 29px; }
.c-id { width: 143px; }
.c-add { width: 151px; }
.c { width: 144px; }
.sheet thead .corner, .sheet thead .id { background: #dfe2e7; }
.corner svg { display: block; margin: auto; }
.sheet thead .add-col { background: #fdd956; font-style: italic; }
.sheet thead div { display: flex; align-items: center; padding: 0 9px 0 5px; justify-content: space-between; }
.sheet thead .id span { flex: 1; text-align: center; }
.sheet thead .id div { padding-left: 0; }
.sheet tbody .new { background: #fbd657; text-align: center; line-height: 16px; }
.value { text-align: right; padding-right: 3px !important; }
.entry { position: relative; }
.entry input { position: absolute; left: -2px; top: 0; width: 155px; height: 34px; border: 2px solid #f3a2a7; background: #fff; }
.records { display: flex; align-items: center; height: 31px; padding-left: 8px; border-top: 2px solid #9a9da0; background: linear-gradient(#f3f4f6 50%, #e5e6e8 50%); color: #555; }
.records input { height: 25px; width: 76px; border: 2px solid #a6a6a6; background: #fff; padding: 0 2px; color: #111; }
.step { display: flex; gap: 17px; width: 55px; padding-left: 12px; justify-content: flex-start; }
.records label { width: 58px; }
.step.next { width: 88px; padding-left: 13px; gap: 14px; }
.step.next .bare:nth-child(2) { padding-left: 4px; }
.records .filter { display: flex; align-items: center; gap: 5px; height: 29px; width: 123px; padding-left: 12px; border: 1px solid #b5b5b5; border-width: 0 1px; white-space: nowrap; }
.records .find { width: 107px; margin-left: 8px; }

.status { display: flex; justify-content: space-between; height: 35px; background: #f1f1f1; border-top: 2px solid #b4b4b4; line-height: 32px; padding-left: 2px; color: #555; }
.modes { display: flex; }
.modes button { width: 53px; display: grid; place-items: center; }
.modes .on { width: 59px; background: #cbcbcb; }
```
